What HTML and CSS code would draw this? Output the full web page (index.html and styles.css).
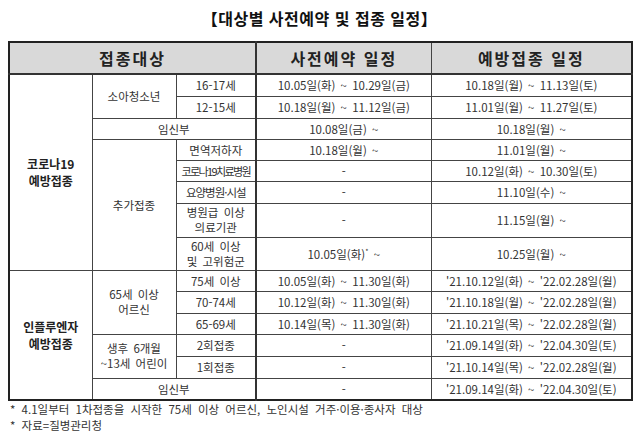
FILE: index.html
```html
<!DOCTYPE html>
<html lang="ko">
<head>
<meta charset="utf-8">
<link rel="stylesheet" href="styles.css">
</head>
<body>
<div class="page">
  <h1 class="title">【대상별 사전예약 및 접종 일정】</h1>
  <table class="sched">
    <colgroup>
      <col class="c1"><col class="c2"><col class="c3"><col class="c4"><col class="c5">
    </colgroup>
    <thead>
      <tr class="head">
        <th colspan="3">접종대상</th>
        <th class="split">사전예약 일정</th>
        <th>예방접종 일정</th>
      </tr>
    </thead>
    <tbody>
      <tr class="h22">
        <td rowspan="8" class="group">코로나19<br>예방접종</td>
        <td rowspan="2">소아청소년</td>
        <td>16-17세</td>
        <td class="split">10.05일(화) ~ 10.29일(금)</td>
        <td>10.18일(월) ~ 11.13일(토)</td>
      </tr>
      <tr class="h22">
        <td>12-15세</td>
        <td class="split">10.18일(월) ~ 11.12일(금)</td>
        <td>11.01일(월) ~ 11.27일(토)</td>
      </tr>
      <tr class="h21">
        <td colspan="2">임신부</td>
        <td class="split">10.08일(금) ~</td>
        <td>10.18일(월) ~</td>
      </tr>
      <tr class="h21">
        <td rowspan="5">추가접종</td>
        <td>면역저하자</td>
        <td class="split">10.18일(월) ~</td>
        <td>11.01일(월) ~</td>
      </tr>
      <tr class="h21">
        <td class="tight">코로나19치료병원</td>
        <td class="split">-</td>
        <td>10.12일(화) ~ 10.30일(토)</td>
      </tr>
      <tr class="h22">
        <td class="tight2">요양병원·시설</td>
        <td class="split">-</td>
        <td>11.10일(수) ~</td>
      </tr>
      <tr class="h34">
        <td class="two">병원급 이상<br>의료기관</td>
        <td class="split">-</td>
        <td>11.15일(월) ~</td>
      </tr>
      <tr class="h33">
        <td class="two">60세 이상<br>및 고위험군</td>
        <td class="split">10.05일(화)<sup class="mark">*</sup> ~</td>
        <td>10.25일(월) ~</td>
      </tr>
      <tr class="h21">
        <td rowspan="6" class="group">인플루엔자<br>예방접종</td>
        <td rowspan="3" class="two">65세 이상<br>어르신</td>
        <td>75세 이상</td>
        <td class="split">10.05일(화) ~ 11.30일(화)</td>
        <td>'21.10.12일(화) ~ '22.02.28일(월)</td>
      </tr>
      <tr class="h22">
        <td>70-74세</td>
        <td class="split">10.12일(화) ~ 11.30일(화)</td>
        <td>'21.10.18일(월) ~ '22.02.28일(월)</td>
      </tr>
      <tr class="h21">
        <td>65-69세</td>
        <td class="split">10.14일(목) ~ 11.30일(화)</td>
        <td>'21.10.21일(목) ~ '22.02.28일(월)</td>
      </tr>
      <tr class="h22">
        <td rowspan="2" class="two">생후 6개월<br>~13세 어린이</td>
        <td>2회접종</td>
        <td class="split">-</td>
        <td>'21.09.14일(화) ~ '22.04.30일(토)</td>
      </tr>
      <tr class="h22">
        <td>1회접종</td>
        <td class="split">-</td>
        <td>'21.10.14일(목) ~ '22.02.28일(월)</td>
      </tr>
      <tr class="h22">
        <td colspan="2">임신부</td>
        <td class="split">-</td>
        <td>'21.09.14일(화) ~ '22.04.30일(토)</td>
      </tr>
    </tbody>
  </table>
  <div class="notes">
    <p>* 4.1일부터 1차접종을 시작한 75세 이상 어르신, 노인시설 거주·이용·종사자 대상</p>
    <p>* 자료=질병관리청</p>
  </div>
</div>
</body>
</html>
```
FILE: styles.css
```css
html, body {
  margin: 0;
  padding: 0;
  background: #ffffff;
}
body {
  font-family: "Noto Sans CJK KR", "Noto Sans", sans-serif;
  color: #333333;
}
.page {
  width: 639px;
  height: 433px;
  overflow: hidden;
}
.title {
  margin: 0;
  height: 41px;
  padding-bottom: 5px;
  box-sizing: border-box;
  display: flex;
  align-items: center;
  justify-content: center;
  font-size: 16px;
  font-weight: bold;
  letter-spacing: 0.5px;
  color: #111111;
}
.sched {
  margin-left: 8px;
  width: 623px;
  border-collapse: collapse;
  table-layout: fixed;
  border: 2px solid #222222;
  font-size: 11.5px;
  line-height: 14px;
  word-spacing: 2px;
}
.c1 { width: 83px; }
.c2 { width: 84px; }
.c3 { width: 80px; }
.c4 { width: 175px; }
.c5 { width: 201px; }
.sched th,
.sched td {
  border: 1px solid #444444;
  padding: 0;
  text-align: center;
  vertical-align: middle;
  white-space: nowrap;
}
.head {
  height: 32px;
  background: #d9d9d9;
}
.head th {
  font-size: 16px;
  font-weight: bold;
  letter-spacing: 2px;
  word-spacing: 0;
  color: #222222;
  border-bottom: 2px solid #333333;
}
.sched .split {
  border-left: 2px solid #333333;
}
.h21 { height: 21px; }
.h22 { height: 22px; }
.h33 { height: 33px; }
.h34 { height: 34px; }
.group {
  font-weight: bold;
  font-size: 12px;
  line-height: 17px;
  word-spacing: 0;
  color: #222222;
}
.two {
  line-height: 15px;
}
.tight {
  font-size: 11px;
  letter-spacing: -1.6px;
}
.tight2 {
  letter-spacing: -1px;
}
.mark {
  font-size: 7px;
  line-height: 0;
  vertical-align: 5px;
}
.notes {
  margin: 0 0 0 10px;
  font-size: 11.5px;
  line-height: 16px;
  word-spacing: 3px;
  color: #333333;
}
.notes p {
  margin: 0;
}
```
